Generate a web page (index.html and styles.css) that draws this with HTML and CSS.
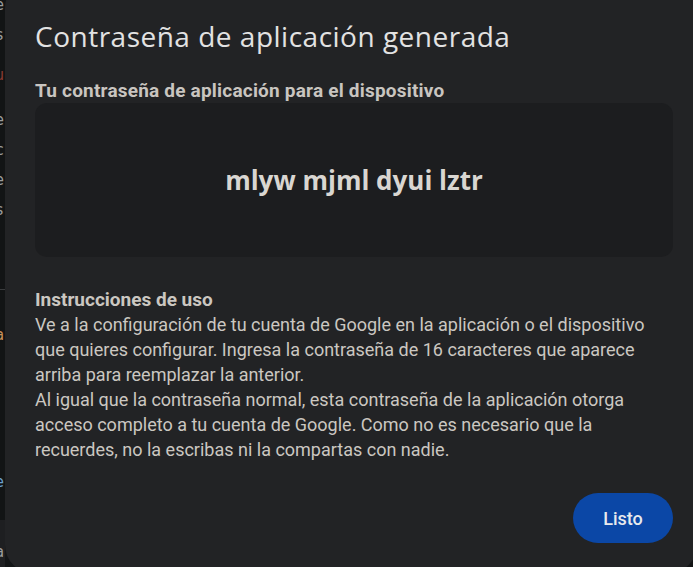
FILE: index.html
```html
<!DOCTYPE html>
<html lang="es">
<head>
<meta charset="utf-8">
<title>Contraseña de aplicación generada</title>
<link rel="stylesheet" href="styles.css">
</head>
<body>
<div class="screen">
  <div class="backdrop">
    <div class="bd-top">
      <span class="bd-l g l1">e</span>
      <span class="bd-l g l2">s</span>
      <span class="bd-l r l3">u</span>
      <span class="bd-l g l4">e</span>
      <span class="bd-l g l5">c</span>
      <span class="bd-l g l6">e</span>
      <span class="bd-l g l7">s</span>
    </div>
    <div class="bd-mid">
      <span class="bd-l o l8">a</span>
      <span class="bd-l b l9">e</span>
    </div>
    <div class="bd-bottom">
      <span class="bd-l g l10">a</span>
    </div>
  </div>
  <div class="dialog" role="dialog">
    <h1 class="title">Contraseña de aplicación generada</h1>
    <h2 class="label">Tu contraseña de aplicación para el dispositivo</h2>
    <div class="pwbox"><span class="pw">mlyw mjml dyui lztr</span></div>
    <div class="instructions">
      <h3 class="inst-title">Instrucciones de uso</h3>
      <p class="inst-text">Ve a la configuración de tu cuenta de Google en la aplicación o el dispositivo que quieres configurar. Ingresa la contraseña de 16 caracteres que aparece arriba para reemplazar la anterior.</p>
      <p class="inst-text">Al igual que la contraseña normal, esta contraseña de la aplicación otorga acceso completo a tu cuenta de Google. Como no es necesario que la recuerdes, no la escribas ni la compartas con nadie.</p>
    </div>
    <div class="actions"><button class="btn">Listo</button></div>
  </div>
</div>
</body>
</html>
```
FILE: styles.css
```css
html, body {
  margin: 0;
  padding: 0;
  background: #131516;
  overflow: hidden;
  width: 693px;
  height: 567px;
}
.screen {
  display: flex;
  width: 693px;
  height: 567px;
  overflow: hidden;
  font-family: Roboto, "Liberation Sans", sans-serif;
}
.backdrop {
  flex: 0 0 5px;
  width: 5px;
  display: flex;
  flex-direction: column;
  overflow: hidden;
  font-family: "DejaVu Sans Mono", monospace;
  font-size: 15px;
}
.bd-top {
  height: 289px;
  background: #121415;
  border-bottom: 1px solid #3a3c3e;
  display: flex;
  flex-direction: column;
}
.bd-mid {
  height: 230px;
  background: #121415;
  display: flex;
  flex-direction: column;
}
.bd-bottom {
  flex: 1;
  background: #1e1f21;
  display: flex;
  flex-direction: column;
}
.bd-l {
  display: block;
  margin-left: -5px;
  line-height: 15px;
}
.g { color: #9a9c9e; }
.r { color: #8a3a32; }
.o { color: #c7905a; }
.b { color: #6aa0d0; }
.l1 { margin-top: -2px; }
.l2 { margin-top: 15px; }
.l3 { margin-top: 25px; }
.l4 { margin-top: 30px; }
.l5 { margin-top: 15px; }
.l6 { margin-top: 15px; }
.l7 { margin-top: 15px; }
.l8 { margin-top: 38px; }
.l9 { margin-top: 132px; }
.l10 { margin-top: 25px; }

.dialog {
  flex: 0 0 692px;
  width: 692px;
  height: 593px;
  margin-top: -20px;
  box-sizing: border-box;
  background: #222325;
  border-radius: 28px;
  padding: 38px 24px 30px 30px;
  display: flex;
  flex-direction: column;
  color: #e3e3e3;
}
.title {
  margin: 0;
  font-family: "Open Sans", sans-serif;
  font-weight: 400;
  font-size: 28px;
  line-height: 36px;
  color: #e2e2e2;
  letter-spacing: 0.5px;
}
.label {
  margin: 25px 0 0;
  font-size: 19px;
  font-weight: 700;
  line-height: 24px;
  color: #c9c5c0;
  letter-spacing: 0.2px;
}
.pwbox {
  margin-top: 0;
  height: 154px;
  background: #1c1d1f;
  border-radius: 12px;
  display: flex;
  align-items: center;
  justify-content: center;
}
.pw {
  font-family: "Open Sans", sans-serif;
  font-weight: 700;
  font-size: 26px;
  color: #d9d6d1;
}
.instructions {
  margin-top: 30px;
}
.inst-title {
  margin: 0;
  font-size: 19px;
  font-weight: 700;
  line-height: 25px;
  color: #cbc7c1;
}
.inst-text {
  margin: 0;
  font-size: 18px;
  line-height: 25px;
  color: #cbc7c1;
}
.actions {
  margin-top: auto;
  display: flex;
  justify-content: flex-end;
}
.btn {
  width: 100px;
  height: 50px;
  border: none;
  border-radius: 25px;
  background: #0b47a6;
  color: #e8eaed;
  font-family: Roboto, sans-serif;
  font-weight: 500;
  font-size: 18px;
  cursor: pointer;
}
```
